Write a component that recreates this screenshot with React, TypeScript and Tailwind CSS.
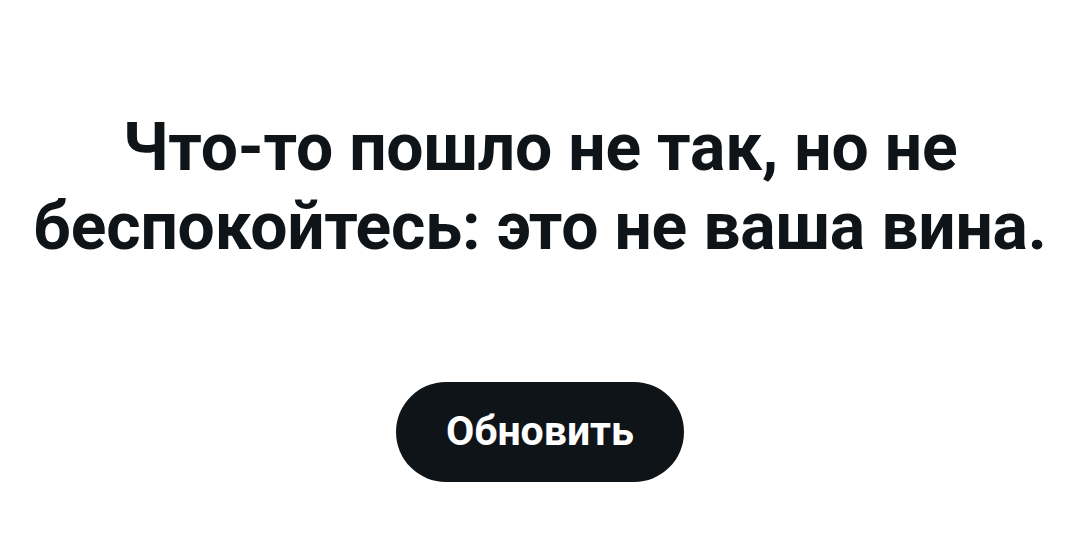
export default function App() {
  return (
    <div className="w-[1080px] h-[552px] bg-white flex flex-col items-center" style={{ fontFamily: "Roboto, 'Noto Sans', sans-serif" }}>
      <h1 className="mt-[108px] text-center font-bold text-[#0f1419] text-[66px] leading-[79px] tracking-[-0.2px]">
        Что-то пошло не так, но не
        <br />
        беспокойтесь: это не ваша вина.
      </h1>
      <button className="mt-[116px] w-[288px] h-[100px] rounded-full bg-[#0f1419] text-white font-bold text-[41px]">
        Обновить
      </button>
    </div>
  );
}
